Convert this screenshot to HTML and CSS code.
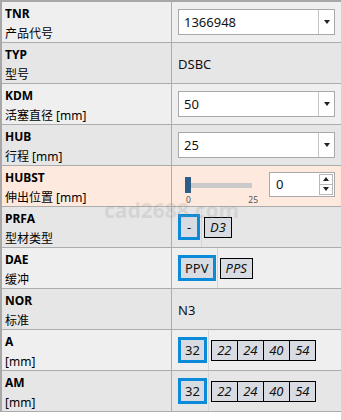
FILE: index.html
```html
<!DOCTYPE html>
<html>
<head>
  <meta charset="utf-8">
  <title>DSBC</title>
  <link rel="stylesheet" href="styles.css">
</head>
<body>
<div class="sheet">
  <div class="row light">
    <div class="label"><b>TNR</b><span>产品代号</span></div>
    <div class="value">
      <div class="combo"><span class="combo-text">1366948</span><span class="combo-btn"><i class="arrow"></i></span></div>
    </div>
  </div>
  <div class="row dark">
    <div class="label"><b>TYP</b><span>型号</span></div>
    <div class="value"><span class="plain">DSBC</span></div>
  </div>
  <div class="row light">
    <div class="label"><b>KDM</b><span>活塞直径 [mm]</span></div>
    <div class="value">
      <div class="combo"><span class="combo-text">50</span><span class="combo-btn"><i class="arrow"></i></span></div>
    </div>
  </div>
  <div class="row dark">
    <div class="label"><b>HUB</b><span>行程 [mm]</span></div>
    <div class="value">
      <div class="combo"><span class="combo-text">25</span><span class="combo-btn"><i class="arrow"></i></span></div>
    </div>
  </div>
  <div class="row active">
    <div class="label"><b>HUBST</b><span>伸出位置 [mm]</span></div>
    <div class="value">
      <div class="slider">
        <div class="track"><span class="thumb"></span></div>
        <div class="ticks"><span>0</span><span>25</span></div>
      </div>
      <div class="spin">
        <span class="spin-text">0</span>
        <span class="spin-btns">
          <span class="spin-btn"><i class="arrow up"></i></span>
          <span class="spin-btn"><i class="arrow"></i></span>
        </span>
      </div>
    </div>
  </div>
  <div class="row dark">
    <div class="label"><b>PRFA</b><span>型材类型</span></div>
    <div class="value choices">
      <div class="sel"><span class="opt on dash">-</span></div>
      <div class="opts"><span class="opt">D3</span></div>
    </div>
  </div>
  <div class="row light">
    <div class="label"><b>DAE</b><span>缓冲</span></div>
    <div class="value choices">
      <div class="sel"><span class="opt on">PPV</span></div>
      <div class="opts"><span class="opt">PPS</span></div>
    </div>
  </div>
  <div class="row dark">
    <div class="label"><b>NOR</b><span>标准</span></div>
    <div class="value"><span class="plain">N3</span></div>
  </div>
  <div class="row light">
    <div class="label"><b>A</b><span>[mm]</span></div>
    <div class="value choices">
      <div class="sel"><span class="opt on">32</span></div>
      <div class="opts joined"><span class="opt">22</span><span class="opt">24</span><span class="opt">40</span><span class="opt">54</span></div>
    </div>
  </div>
  <div class="row dark">
    <div class="label"><b>AM</b><span>[mm]</span></div>
    <div class="value choices">
      <div class="sel"><span class="opt on">32</span></div>
      <div class="opts joined"><span class="opt">22</span><span class="opt">24</span><span class="opt">40</span><span class="opt">54</span></div>
    </div>
  </div>
  <div class="watermark">cad2688.com</div>
</div>
</body>
</html>
```

FILE: styles.css
```css
* {
  box-sizing: border-box;
}
body {
  margin: 0;
  font-family: "Noto Sans", "Noto Sans CJK SC", sans-serif;
  font-size: 12px;
  color: #000;
  background: #fff;
}
.sheet {
  position: relative;
  width: 341px;
  border-top: 2px solid #a8a8a8;
  border-left: 2px solid #a8a8a8;
}
.row {
  display: flex;
  height: 41px;
  border-bottom: 1px solid #acacac;
}
.light {
  background: #efefef;
}
.dark {
  background: #e6e6e6;
}
.active {
  background: #fde9dd;
}
.label {
  width: 170px;
  padding: 2px 0 0 3px;
  border-right: 1px solid #acacac;
  line-height: 20px;
}
.label b,
.label span {
  display: block;
  white-space: nowrap;
}
.value {
  flex: 1;
  display: flex;
  align-items: center;
  padding: 0 6px;
  font-size: 13px;
  color: #111;
}
.plain {
  padding-top: 1px;
}
.combo {
  flex: 1;
  display: flex;
  height: 26px;
  background: #fff;
  border: 1px solid #a9a9a9;
}
.combo-text {
  flex: 1;
  padding-left: 5px;
  line-height: 24px;
}
.combo-btn {
  width: 16px;
  border-left: 1px solid #c4c4c4;
  display: flex;
  align-items: center;
  justify-content: center;
}
.arrow {
  width: 0;
  height: 0;
  border-left: 3.5px solid transparent;
  border-right: 3.5px solid transparent;
  border-top: 4px solid #222;
}
.arrow.up {
  border-top: none;
  border-bottom: 4px solid #222;
}
.slider {
  width: 72px;
  margin: 10px 0 0 8px;
  padding-top: 6px;
}
.track {
  position: relative;
  width: 66px;
  height: 5px;
  background: #c9c9c9;
}
.thumb {
  position: absolute;
  left: -1px;
  top: -6px;
  width: 6px;
  height: 16px;
  background: #2e5e86;
}
.ticks {
  display: flex;
  justify-content: space-between;
  margin-top: 7px;
  font-size: 8.5px;
  line-height: 10px;
  color: #555;
}
.spin {
  margin: 0 0 4px auto;
  width: 66px;
  height: 25px;
  display: flex;
  background: #fff;
  border: 1px solid #a9a9a9;
}
.spin-text {
  flex: 1;
  padding-left: 6px;
  line-height: 23px;
}
.spin-btns {
  width: 14px;
  margin: 1px 1px 1px 0;
  display: flex;
  flex-direction: column;
  border: 1px solid #b8b8b8;
}
.spin-btn {
  flex: 1;
  display: flex;
  align-items: center;
  justify-content: center;
}
.spin-btn + .spin-btn {
  border-top: 1px solid #b8b8b8;
}
.choices {
  align-items: stretch;
}
.sel {
  display: flex;
  align-items: center;
  padding-right: 1px;
  border-right: 1px solid #d6d6d6;
}
.opts {
  display: flex;
  align-items: center;
  padding-left: 2px;
}
.opt {
  height: 21px;
  padding: 0 5px;
  line-height: 19px;
  border: 1px solid #000;
  background: #d8dce2;
  font-style: italic;
  color: #111;
}
.opt.on {
  height: 26px;
  line-height: 20px;
  padding: 0 4px;
  border: 3px solid #0b8ad9;
  font-style: normal;
}
.opt.dash {
  width: 22px;
  text-align: center;
  padding: 0;
}
.joined .opt {
  width: 27px;
  padding: 0;
  text-align: center;
}
.joined .opt + .opt {
  margin-left: -1px;
}
.watermark {
  position: absolute;
  left: 102px;
  top: 196px;
  font-size: 21px;
  font-weight: bold;
  line-height: 24px;
  color: rgba(150, 150, 150, 0.22);
  pointer-events: none;
}
```
